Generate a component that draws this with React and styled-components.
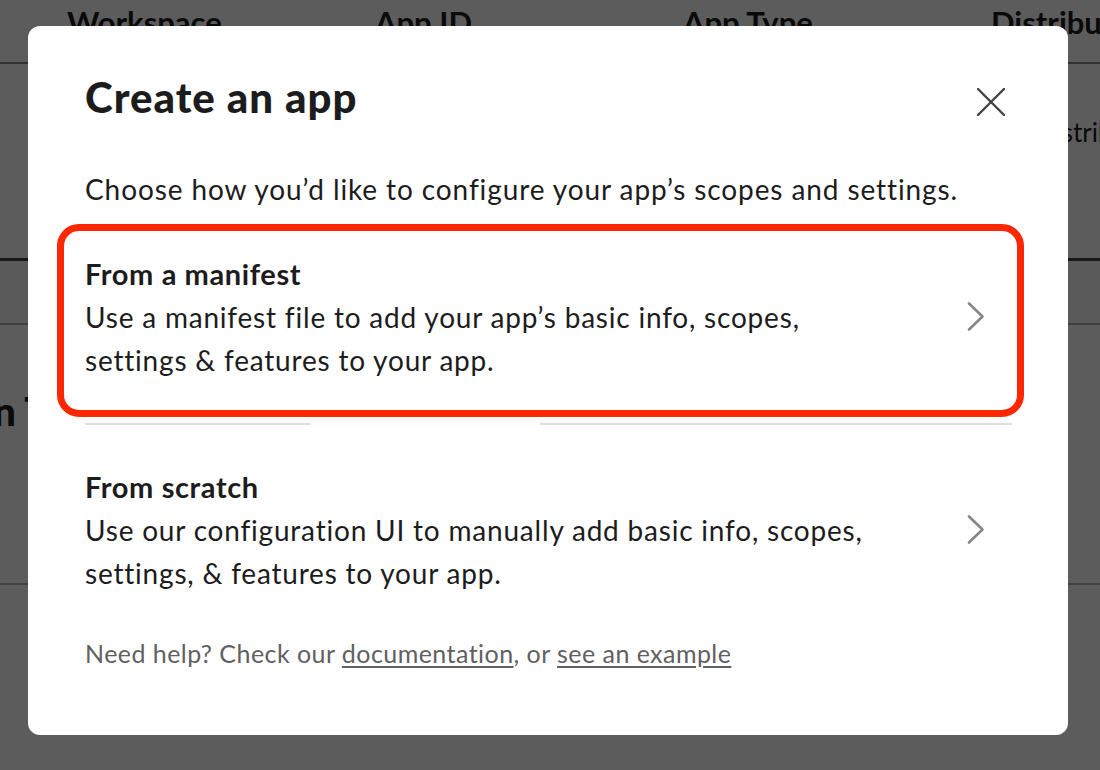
import React from 'react';
import styled, { createGlobalStyle } from 'styled-components';

const GlobalStyle = createGlobalStyle`
    html, body {
        margin: 0;
        padding: 0;
        background: #ffffff;
        font-family: Lato, 'Open Sans', sans-serif;
        color: #1d1c1d;
        overflow: hidden;
    }
`;

/* page behind the dialog */
const Page = styled.div`
    width: 1100px;
    height: 770px;
    background: #ffffff;
    overflow: hidden;
`;

const TableHead = styled.div`
    display: grid;
    grid-template-columns: repeat(4, 308px);
    padding: 3px 0 0 67px;
    height: 59px;
    border-bottom: 2px solid #8a8a8a;
    font-size: 31px;
    font-weight: 700;
`;

const TableRow = styled.div`
    display: grid;
    grid-template-columns: repeat(4, 308px);
    padding: 52px 0 0 67px;
    height: 142px;
    font-size: 26px;
    border-bottom: 3px solid #4a4a4a;
`;

const Band = styled.div`
    height: 62px;
    border-bottom: 2px solid #b5b5b5;
    background: #f8f8f8;
`;

const SectionTitle = styled.h2`
    display: flex;
    margin: 62px 0 0;
    font-size: 40px;
    font-weight: 900;
    white-space: nowrap;
    height: 196px;
    border-bottom: 2px solid #b5b5b5;
`;

const TitleLead = styled.span`
    display: flex;
    justify-content: flex-end;
    width: 16px;
    flex: none;
`;

const Backdrop = styled.div`
    position: fixed;
    inset: 0;
    background: rgba(0, 0, 0, 0.64);
    padding: 26px 32px 0 28px;
`;

const Modal = styled.div`
    width: 1040px;
    height: 709px;
    box-sizing: border-box;
    background: #ffffff;
    border-radius: 12px;
    padding: 48px 56px 0 57px;
`;

const Header = styled.div`
    display: flex;
    justify-content: space-between;
    align-items: flex-start;
`;

const Title = styled.h1`
    margin: 0;
    font-size: 42px;
    line-height: 47px;
    letter-spacing: 1px;
    font-weight: 900;
    color: #1d1c1d;
`;

const CloseButton = styled.button`
    display: flex;
    border: none;
    background: none;
    padding: 0;
    margin: 14px 7px 0 0;
    color: #454245;
    cursor: pointer;
`;

const Subtitle = styled.p`
    margin: 53px 0 0;
    font-size: 28px;
    line-height: 31px;
    letter-spacing: 0.9px;
    color: #1d1c1d;
`;

const Highlight = styled.div`
    margin: 19px -12px 0 -28px;
    padding: 0 5px 0 21px;
    border: 7px solid #fe2700;
    border-radius: 22px;
`;

const Option = styled.div`
    display: flex;
    align-items: center;
    justify-content: space-between;
    padding: ${(p) => p.$top}px 27px ${(p) => p.$bottom}px 0;
    cursor: pointer;

    svg {
        margin-bottom: 8px;
    }
`;

const OptionTitle = styled.div`
    font-size: 29px;
    line-height: 32px;
    letter-spacing: 0.6px;
    font-weight: 700;
    color: #1d1c1d;
`;

const OptionText = styled.div`
    margin-top: 6px;
    font-size: 28px;
    line-height: 43px;
    letter-spacing: 0.8px;
    color: #1d1c1d;
`;

const Divider = styled.div`
    display: flex;
    justify-content: space-between;
    margin-top: 6px;
`;

const DividerPart = styled.div`
    width: ${(p) => p.$w}px;
    height: 2px;
    background: #dedede;
`;

const Footer = styled.p`
    margin: 44px 0 0;
    font-size: 25px;
    line-height: 29px;
    letter-spacing: 0.45px;
    color: #616061;

    a {
        color: #616061;
        text-decoration: underline;
        text-underline-offset: 3px;
    }
`;

const Chevron = () => (
    <svg width="18" height="31" viewBox="0 0 18 31" fill="none">
        <path d="M2 2.5 L15.5 15.5 L2 28.5" stroke="#868686" strokeWidth="2.6" strokeLinecap="round" strokeLinejoin="round" />
    </svg>
);

const CloseIcon = () => (
    <svg width="28" height="28" viewBox="0 0 28 28" fill="none">
        <path d="M1 1 L27 27 M27 1 L1 27" stroke="currentColor" strokeWidth="2.4" strokeLinecap="round" />
    </svg>
);

const ChoiceRow = ({ title, text, top, bottom }) => (
    <Option $top={top} $bottom={bottom}>
        <div>
            <OptionTitle>{title}</OptionTitle>
            <OptionText>{text}</OptionText>
        </div>
        <Chevron />
    </Option>
);

export default function App() {
    return (
        <>
            <GlobalStyle />
            <Page>
                <TableHead>
                    <span>Workspace</span>
                    <span>App ID</span>
                    <span>App Type</span>
                    <span>Distribution</span>
                </TableHead>
                <TableRow>
                    <span>Acme Corp</span>
                    <span>A04QX1B2C3D</span>
                    <span>Custom</span>
                    <span>Not distributed</span>
                </TableRow>
                <Band />
                <SectionTitle>
                    <TitleLead>App Verification</TitleLead>
                    <span>&nbsp;Tokens</span>
                </SectionTitle>
            </Page>

            <Backdrop>
                <Modal>
                    <Header>
                        <Title>Create an app</Title>
                        <CloseButton aria-label="Close">
                            <CloseIcon />
                        </CloseButton>
                    </Header>
                    <Subtitle>Choose how you’d like to configure your app’s scopes and settings.</Subtitle>

                    <Highlight>
                        <ChoiceRow
                            top={27}
                            bottom={28}
                            title="From a manifest"
                            text={<>Use a manifest file to add your app’s basic info, scopes,<br />settings &amp; features to your app.</>}
                        />
                    </Highlight>
                    <Divider>
                        <DividerPart $w={225} />
                        <DividerPart $w={472} />
                    </Divider>

                    <ChoiceRow
                        top={46}
                        bottom={0}
                        title="From scratch"
                        text={<>Use our configuration UI to manually add basic info, scopes,<br />settings, &amp; features to your app.</>}
                    />

                    <Footer>
                        Need help? Check our <a href="#docs">documentation</a>, or <a href="#example">see an example</a>
                    </Footer>
                </Modal>
            </Backdrop>
        </>
    );
}
